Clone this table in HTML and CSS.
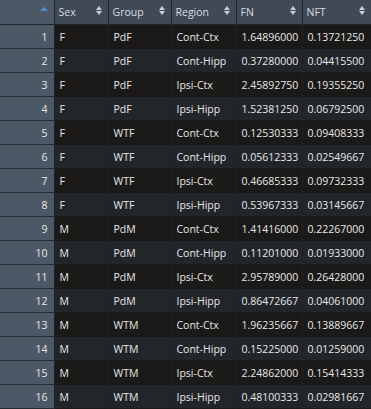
FILE: index.html
```html
<!DOCTYPE html>
<html>
<head>
<meta charset="utf-8">
<link rel="stylesheet" href="styles.css">
</head>
<body>
<table class="grid">
<colgroup>
<col class="c-num"><col class="c-sex"><col class="c-group"><col class="c-region"><col class="c-fn"><col class="c-nft">
</colgroup>
<thead>
<tr>
<th class="corner"><span class="up"></span></th>
<th><span class="lbl">Sex</span><span class="sort"><i class="u"></i><i class="d"></i></span></th>
<th><span class="lbl">Group</span><span class="sort"><i class="u"></i><i class="d"></i></span></th>
<th><span class="lbl">Region</span><span class="sort"><i class="u"></i><i class="d"></i></span></th>
<th><span class="lbl">FN</span><span class="sort"><i class="u"></i><i class="d"></i></span></th>
<th><span class="lbl">NFT</span><span class="sort"><i class="u"></i><i class="d"></i></span></th>
</tr>
</thead>
<tbody>
<tr><td class="num">1</td><td>F</td><td>PdF</td><td>Cont-Ctx</td><td>1.64896000</td><td>0.13721250</td></tr>
<tr><td class="num">2</td><td>F</td><td>PdF</td><td>Cont-Hipp</td><td>0.37280000</td><td>0.04415500</td></tr>
<tr><td class="num">3</td><td>F</td><td>PdF</td><td>Ipsi-Ctx</td><td>2.45892750</td><td>0.19355250</td></tr>
<tr><td class="num">4</td><td>F</td><td>PdF</td><td>Ipsi-Hipp</td><td>1.52381250</td><td>0.06792500</td></tr>
<tr><td class="num">5</td><td>F</td><td>WTF</td><td>Cont-Ctx</td><td>0.12530333</td><td>0.09408333</td></tr>
<tr><td class="num">6</td><td>F</td><td>WTF</td><td>Cont-Hipp</td><td>0.05612333</td><td>0.02549667</td></tr>
<tr><td class="num">7</td><td>F</td><td>WTF</td><td>Ipsi-Ctx</td><td>0.46685333</td><td>0.09732333</td></tr>
<tr><td class="num">8</td><td>F</td><td>WTF</td><td>Ipsi-Hipp</td><td>0.53967333</td><td>0.03145667</td></tr>
<tr><td class="num">9</td><td>M</td><td>PdM</td><td>Cont-Ctx</td><td>1.41416000</td><td>0.22267000</td></tr>
<tr><td class="num">10</td><td>M</td><td>PdM</td><td>Cont-Hipp</td><td>0.11201000</td><td>0.01933000</td></tr>
<tr><td class="num">11</td><td>M</td><td>PdM</td><td>Ipsi-Ctx</td><td>2.95789000</td><td>0.26428000</td></tr>
<tr><td class="num">12</td><td>M</td><td>PdM</td><td>Ipsi-Hipp</td><td>0.86472667</td><td>0.04061000</td></tr>
<tr><td class="num">13</td><td>M</td><td>WTM</td><td>Cont-Ctx</td><td>1.96235667</td><td>0.13889667</td></tr>
<tr><td class="num">14</td><td>M</td><td>WTM</td><td>Cont-Hipp</td><td>0.15225000</td><td>0.01259000</td></tr>
<tr><td class="num">15</td><td>M</td><td>WTM</td><td>Ipsi-Ctx</td><td>2.24862000</td><td>0.15414333</td></tr>
<tr><td class="num">16</td><td>M</td><td>WTM</td><td>Ipsi-Hipp</td><td>0.48100333</td><td>0.02981667</td></tr>
</tbody>
</table>
</body>
</html>
```
FILE: styles.css
```css
html, body {
  margin: 0;
  padding: 0;
  background: #1b1a19;
}
.grid {
  width: 371px;
  table-layout: fixed;
  border-collapse: collapse;
  font-family: "Open Sans", "Noto Sans", sans-serif;
  font-size: 10.5px;
  color: #e6e6e6;
}
.c-num { width: 54px; }
.c-sex { width: 54px; }
.c-group { width: 63px; }
.c-region { width: 65px; }
.c-fn { width: 66px; }
.c-nft { width: 69px; }

.grid th {
  height: 24px;
  padding: 0 0 0 4px;
  background: #404956;
  color: #d9dee4;
  font-weight: normal;
  text-align: left;
  border-right: 1px solid #1e252e;
  border-bottom: 1px solid #1e252e;
  position: relative;
  white-space: nowrap;
  overflow: hidden;
}
.grid th:last-child { border-right: none; }
.grid th.corner {
  background: #4d5866;
}
.up {
  position: absolute;
  right: 6px;
  top: 7px;
  width: 0;
  height: 0;
  border-left: 4px solid transparent;
  border-right: 4px solid transparent;
  border-bottom: 4px solid #4a8fd6;
}
.sort {
  position: absolute;
  right: 5px;
  top: 6px;
  width: 7px;
  height: 10px;
}
.sort i {
  position: absolute;
  left: 0;
  width: 0;
  height: 0;
  border-left: 3px solid transparent;
  border-right: 3px solid transparent;
}
.sort .u { top: 0; border-bottom: 4px solid #c9ced5; }
.sort .d { top: 5px; border-top: 4px solid #c9ced5; }

.grid td {
  height: 23px;
  padding: 0 0 0 5px;
  white-space: nowrap;
  overflow: hidden;
  border-right: 1px solid #202225;
  border-bottom: 1px solid transparent;
}
.grid td:last-child { border-right: none; }
.grid tbody tr:nth-child(odd) td { background: #1b1a19; }
.grid tbody tr:nth-child(even) td { background: #22262b; }
.grid tbody tr td.num {
  background: #4d5866;
  color: #e6e9ed;
  text-align: right;
  padding: 0 6px 0 0;
  border-right: 1px solid #1e252e;
  border-bottom: 1px solid #232a33;
}
```
